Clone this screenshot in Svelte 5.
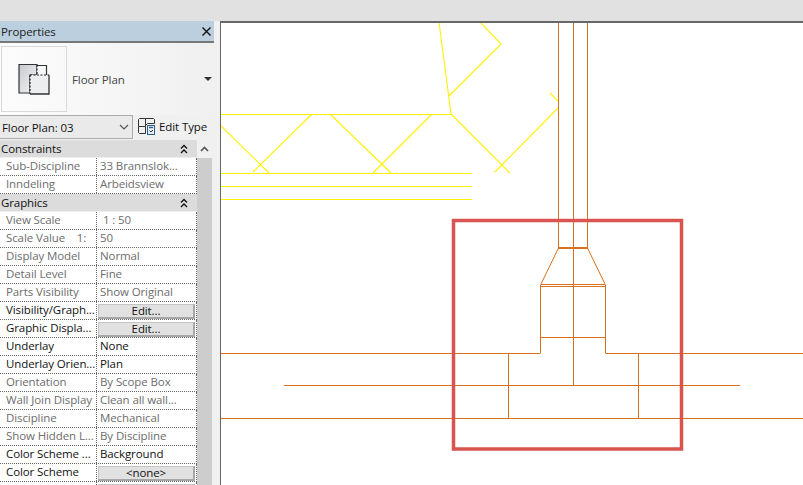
<script>
	const groups = [
		{
			name: 'Constraints',
			rows: [
				{ label: 'Sub-Discipline', value: '33 Brannslok...', off: true },
				{ label: 'Inndeling', value: 'Arbeidsview', off: true }
			]
		},
		{
			name: 'Graphics',
			rows: [
				{ label: 'View Scale', value: ' 1 : 50', off: true },
				{ label: 'Scale Value    1:', value: '50', off: true },
				{ label: 'Display Model', value: 'Normal', off: true },
				{ label: 'Detail Level', value: 'Fine', off: true },
				{ label: 'Parts Visibility', value: 'Show Original', off: true },
				{ label: 'Visibility/Graph...', button: 'Edit...' },
				{ label: 'Graphic Displa...', button: 'Edit...' },
				{ label: 'Underlay', value: 'None' },
				{ label: 'Underlay Orien...', value: 'Plan' },
				{ label: 'Orientation', value: 'By Scope Box', off: true },
				{ label: 'Wall Join Display', value: 'Clean all wall...', off: true },
				{ label: 'Discipline', value: 'Mechanical', off: true },
				{ label: 'Show Hidden L...', value: 'By Discipline', off: true },
				{ label: 'Color Scheme ...', value: 'Background' },
				{ label: 'Color Scheme', button: '<none>' },
				{ label: '', button: ' ' }
			]
		}
	];

	const yellow = [
		[439, 22, 451, 114], [221, 114.5, 451, 114.5], [451, 114, 510, 173], [449, 96, 501, 44], [501, 44, 480, 22],
		[558, 108, 495, 172], [550, 93, 558, 101], [221, 126, 269, 173], [312, 114, 253, 172], [330, 114, 391, 173],
		[432, 114, 373, 173], [221, 173.5, 472, 173.5], [221, 186.5, 472, 186.5], [221, 199.5, 472, 199.5]
	];

	const orange = [
		[558.5, 22, 558.5, 248], [573.5, 22, 573.5, 385], [587.5, 22, 587.5, 248],
		[558.5, 248, 541, 284], [587.5, 248, 605, 284],
		[540.5, 284.5, 605.5, 284.5], [540.5, 286.5, 605.5, 286.5], [540.5, 337.5, 605.5, 337.5],
		[540.5, 285, 540.5, 353], [605.5, 285, 605.5, 353],
		[221, 353.5, 540.5, 353.5], [605.5, 353.5, 803, 353.5],
		[284, 385.5, 740, 385.5], [221, 418.5, 803, 418.5],
		[508.5, 353, 508.5, 418], [638.5, 353, 638.5, 418]
	];
</script>

<div class="page">
	<div class="topbar"></div>
	<div class="main">
		<aside class="panel">
			<div class="title">
				<span>Properties</span>
				<svg width="9" height="9" viewBox="0 0 9 9"><path d="M0.5 0.5L8.5 8.5M8.5 0.5L0.5 8.5" stroke="#111" stroke-width="1.4" fill="none" /></svg>
			</div>
			<div class="type-box">
				<div class="thumb">
					<svg width="32" height="32" viewBox="0 0 32 32" fill="none">
						<defs>
							<linearGradient id="sheet" x1="0" y1="0" x2="1" y2="1">
								<stop offset="0" stop-color="#c6c9cf" />
								<stop offset="1" stop-color="#f6f6f6" />
							</linearGradient>
						</defs>
						<path d="M1 1.500H19V12H12V30H1Z" fill="url(#sheet)" stroke="#333" stroke-width="1.200" />
						<path d="M19 2.500H28.500V12H19Z" fill="#f7f7f7" />
						<path d="M19 2.500H28.500V12" stroke="#333" stroke-width="1.200" />
						<path d="M12 12H31V31H12Z" fill="#eceef0" />
						<path d="M31 12V31H12" stroke="#333" stroke-width="1.300" />
						<path d="M12 12H31M12 12V31M19 2V12" stroke="#222" stroke-width="1.200" stroke-dasharray="2 1.500" />
					</svg>
				</div>
				<span class="type-name">Floor Plan</span>
				<i class="caret"></i>
			</div>
			<div class="selector">
				<div class="combo">
					<span>Floor Plan: 03</span>
					<svg width="10" height="6" viewBox="0 0 10 6"><path d="M1 1L5 5L9 1" stroke="#555" stroke-width="1.200" fill="none" /></svg>
				</div>
				<div class="edit-type">
					<svg width="17" height="17" viewBox="0 0 17 17" fill="none">
						<path d="M1.500 0.500H7.500V8.500H0.500V1.500ZM0.500 8.500V14.500L1.500 15.500H7.500V8.500M7.500 0.500H15.500L16.500 1.500V5.500H9.500L7.500 7.500" stroke="#333" />
						<rect x="9.500" y="7.500" width="7" height="9" fill="#e4ecf5" stroke="#2e5d8f" />
						<path d="M11 9.500H15" stroke="#2e5d8f" stroke-width="1.400" />
						<path d="M11.500 12.500L13 14L15 12" stroke="#333" />
					</svg>
					<span>Edit Type</span>
				</div>
			</div>
			<div class="body">
				<div class="grid">
					{#each groups as group}
						<div class="group">
							<span>{group.name}</span>
							<svg width="8" height="10" viewBox="0 0 8 10" fill="none" stroke="#111" stroke-width="1.300">
								<path d="M1 4.500L4 1.500L7 4.500M1 9L4 6L7 9" />
							</svg>
						</div>
						{#each group.rows as row}
							<div class="row" class:off={row.off}>
								<div class="label">{row.label}</div>
								{#if row.button}
									<div class="cell"><div class="btn">{row.button}</div></div>
								{:else}
									<div class="cell value">{row.value}</div>
								{/if}
							</div>
						{/each}
					{/each}
				</div>
				<div class="scroll">
					<div class="scroll-up">
						<svg width="9" height="6" viewBox="0 0 9 6"><path d="M1 5L4.500 1.500L8 5" stroke="#555" stroke-width="1.600" fill="none" /></svg>
					</div>
				</div>
			</div>
		</aside>
		<div class="canvas">
			<svg class="drawing" viewBox="221 23 582 462" width="582" height="462">
				{#each yellow as l}
					<line x1={l[0]} y1={l[1]} x2={l[2]} y2={l[3]} stroke="#fff200" stroke-width="1.100" />
				{/each}
				{#each orange as l}
					<line x1={l[0]} y1={l[1]} x2={l[2]} y2={l[3]} stroke="#d9701f" stroke-width="1" />
				{/each}
				<line x1="558" y1="248" x2="588" y2="248" stroke="#d9701f" stroke-width="2" />
				<rect x="453.500" y="220.500" width="228" height="228.500" fill="none" stroke="#d9534f" stroke-width="3.500" />
			</svg>
		</div>
	</div>
</div>

<style>
	:global(body) {
		margin: 0;
		overflow: hidden;
	}

	.page {
		width: 803px;
		height: 485px;
		overflow: hidden;
		background: #f0f0f0;
		font-family: "Open Sans", "Noto Sans", sans-serif;
		font-size: 11.5px;
		letter-spacing: -0.1px;
		display: flex;
		flex-direction: column;
	}

	.topbar {
		height: 21px;
		flex: none;
		background: #e1e1e1;
	}

	.main {
		flex: 1;
		display: flex;
		min-height: 0;
	}

	.panel {
		width: 214px;
		margin-right: 6px;
		flex: none;
		display: flex;
		flex-direction: column;
		min-height: 0;
		color: #111;
	}

	.title {
		height: 20px;
		background: #bccfdf;
		border-bottom: 2px solid #777;
		display: flex;
		align-items: center;
		justify-content: space-between;
		padding: 0 3px 0 1px;
		color: #222;
	}

	.type-box {
		height: 72px;
		background: linear-gradient(90deg, #fcfcfc, #f0f0f0);
		display: flex;
		align-items: center;
		position: relative;
		flex: none;
	}

	.thumb {
		width: 64px;
		height: 64px;
		margin-left: 1px;
		border: 1px solid #d9d9d9;
		display: flex;
		align-items: center;
		justify-content: center;
	}

	.type-name {
		margin-left: 5px;
		color: #444;
	}

	.caret {
		position: absolute;
		right: 2px;
		top: 34px;
		border-left: 4px solid transparent;
		border-right: 4px solid transparent;
		border-top: 4px solid #333;
	}

	.selector {
		height: 25px;
		display: flex;
		flex: none;
	}

	.combo {
		width: 127px;
		height: 22px;
		background: #eaeaea;
		border: 1px solid #acacac;
		border-left: 0;
		display: flex;
		align-items: center;
		justify-content: space-between;
		padding: 0 3px 0 2px;
	}

	.edit-type {
		display: flex;
		align-items: center;
		gap: 4px;
		margin-left: 5px;
		height: 22px;
	}

	.body {
		flex: 1;
		display: flex;
		min-height: 0;
		overflow: hidden;
	}

	.grid {
		width: 197px;
		flex: none;
	}

	.group {
		height: 18px;
		background: #dcdcdc;
		display: flex;
		align-items: center;
		justify-content: space-between;
		padding: 0 9px 0 1px;
		box-sizing: border-box;
		border-bottom: 1px solid #f0f0f0;
	}

	.row {
		height: 18px;
		display: grid;
		grid-template-columns: 97px 1fr;
		background: #fff;
		box-sizing: border-box;
		border-bottom: 1px dotted #666;
		border-right: 1px dotted #666;
	}

	.label {
		padding-left: 6px;
		line-height: 16px;
		white-space: pre;
		overflow: hidden;
		border-right: 1px dotted #666;
	}

	.cell {
		line-height: 16px;
		white-space: pre;
		overflow: hidden;
		min-width: 0;
	}

	.value {
		padding-left: 3px;
	}

	.off {
		color: #6d6d6d;
	}

	.btn {
		height: 12px;
		line-height: 12px;
		margin: 2px 1px 0;
		text-align: center;
		background: #e1e1e1;
		border: solid #a6a6a6;
		border-width: 1px 2px 2px 1px;
		border-top-color: #c4c4c4;
		border-left-color: #c4c4c4;
	}

	.scroll {
		width: 15px;
		background: #cdcdcd;
		margin-right: 2px;
	}

	.scroll-up {
		height: 18px;
		background: #f0f0f0;
		display: flex;
		align-items: center;
		justify-content: center;
	}

	.canvas {
		flex: 1;
		min-width: 0;
		background: #fff;
		border-left: 1px solid #666;
		border-top: 2px solid #666;
	}

	.drawing {
		display: block;
	}
</style>
